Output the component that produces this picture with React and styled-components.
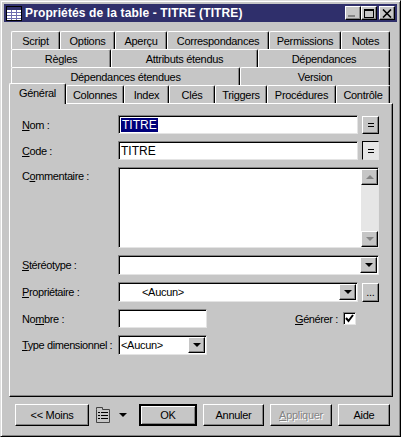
import React from "react";
import styled, { createGlobalStyle, css } from "styled-components";

const GlobalStyle = createGlobalStyle`
  html, body {
    margin: 0;
    padding: 0;
    background: #c6c6c6;
  }
  body {
    font-family: "Liberation Sans", Arial, sans-serif;
    font-size: 11px;
    letter-spacing: -0.3px;
    color: #000;
  }
`;

const raised = css`
  background: #c6c6c6;
  border: 1px solid;
  border-color: #fff #000 #000 #fff;
  box-shadow: inset -1px -1px #848484;
  box-sizing: border-box;
`;

const sunken = css`
  background: #fff;
  border: 1px solid;
  border-color: #848484 #e4e4e4 #e4e4e4 #848484;
  box-shadow: inset 1px 1px #000;
  box-sizing: border-box;
`;

const Window = styled.div`
  width: 401px;
  height: 437px;
  box-sizing: border-box;
  background: #c6c6c6;
  border: 1px solid;
  border-color: #dedede #000 #000 #dedede;
  box-shadow: inset 1px 1px #fff, inset -1px -1px #848484;
  padding: 3px;
  display: flex;
  flex-direction: column;
  overflow: hidden;
`;

const TitleBar = styled.div`
  height: 18px;
  flex: none;
  background: #2f2f6b;
  display: flex;
  align-items: center;
  padding: 0 2px;
  gap: 3px;
`;

const TitleText = styled.div`
  flex: 1;
  color: #fff;
  font-weight: bold;
  font-size: 12px;
  letter-spacing: 0.13px;
  white-space: nowrap;
`;

const TitleButtons = styled.div`
  display: flex;
`;

const TitleButton = styled.div`
  ${raised}
  width: 16px;
  height: 14px;
  margin-left: ${(p) => p.$gap || 0}px;
  display: flex;
  align-items: center;
  justify-content: center;
`;

const Body = styled.div`
  flex: 1;
  display: flex;
  flex-direction: column;
  padding: 9px 4px 0 5px;
`;

const TabStrip = styled.div`
  display: flex;
  flex-direction: column;
`;

const TabRow = styled.div`
  display: flex;
  height: 18px;
  padding-left: ${(p) => (p.$inset ? 0 : 2)}px;
`;

const Tab = styled.div`
  width: ${(p) => p.$w}px;
  height: 18px;
  flex: none;
  box-sizing: border-box;
  background: #c6c6c6;
  border-top: 1px solid #fff;
  border-left: 1px solid #fff;
  border-right: 1px solid #000;
  border-radius: 2px 2px 0 0;
  box-shadow: inset -1px 0 #848484;
  display: flex;
  align-items: center;
  justify-content: center;
  white-space: nowrap;
  ${(p) =>
    p.$active &&
    css`
      position: relative;
      z-index: 1;
      height: 21px;
      margin-top: -2px;
      padding-bottom: 2px;
    `}
`;

const Panel = styled.div`
  width: 384px;
  height: 294px;
  box-sizing: border-box;
  background: #c6c6c6;
  border: 1px solid;
  border-color: #fff #000 #000 #fff;
  box-shadow: inset -1px -1px #848484;
  padding: 11px 13px 0 12px;
`;

const Form = styled.div`
  display: grid;
  grid-template-rows: 19px 19px 81px 20px 20px 19px 20px;
  row-gap: 7px;
`;

const FormRow = styled.div`
  display: flex;
  align-items: ${(p) => (p.$top ? "flex-start" : "center")};
`;

const Label = styled.label`
  width: ${(p) => p.$w || 96}px;
  flex: none;
  white-space: nowrap;
  letter-spacing: -0.4px;
  padding-top: ${(p) => (p.$top ? 3 : 0)}px;
`;

const Field = styled.div`
  ${sunken}
  height: ${(p) => p.$h || 19}px;
  width: ${(p) => (p.$w ? `${p.$w}px` : "auto")};
  flex: ${(p) => (p.$w ? "none" : 1)};
  display: flex;
  align-items: center;
  padding: 0 2px 0 ${(p) => p.$pad || 2}px;
  font-size: 12px;
  letter-spacing: 0;
  line-height: 14px;
`;

const Selected = styled.span`
  background: #00007b;
  color: #fff;
  padding: 0 1px;
`;

const SmallButton = styled.div`
  ${raised}
  width: 17px;
  height: ${(p) => p.$h || 18}px;
  margin-left: 4px;
  flex: none;
  display: flex;
  align-items: center;
  justify-content: center;
  line-height: 1;
  ${(p) =>
    p.$focus &&
    css`
      background: #e6e6e6;
      border-color: #000 #e4e4e4 #e4e4e4 #000;
      box-shadow: none;
    `}
`;

const Equals = styled.span`
  width: 6px;
  height: 2px;
  border-top: 1px solid #000;
  border-bottom: 1px solid #000;
`;

const Memo = styled.div`
  ${sunken}
  flex: 1;
  height: 81px;
  display: flex;
  justify-content: flex-end;
  padding: 1px 0 0 1px;
`;

const ScrollBar = styled.div`
  width: 17px;
  background: #e6e6e6;
  display: flex;
  flex-direction: column;
  justify-content: space-between;
`;

const ScrollButton = styled.div`
  ${raised}
  height: 16px;
  display: flex;
  align-items: center;
  justify-content: center;
`;

const ArrowBox = styled.div`
  ${raised}
  width: 17px;
  height: 16px;
  flex: none;
  display: flex;
  align-items: center;
  justify-content: center;
`;

const Triangle = styled.span`
  width: 0;
  height: 0;
  border-left: ${(p) => p.$size || 4}px solid transparent;
  border-right: ${(p) => p.$size || 4}px solid transparent;
  ${(p) =>
    p.$up
      ? css`
          border-bottom: ${p.$size || 4}px solid ${p.$color || "#000"};
        `
      : css`
          border-top: ${p.$size || 4}px solid ${p.$color || "#000"};
        `}
`;

const Combo = styled(Field)`
  justify-content: space-between;
  padding: 0 1px 0 ${(p) => p.$pad || 2}px;
  font-size: 11px;
  letter-spacing: -0.3px;
`;

const Spacer = styled.div`
  flex: 1;
`;

const CheckBox = styled.div`
  ${sunken}
  width: 13px;
  height: 13px;
  flex: none;
  margin-left: 4px;
  margin-right: 23px;
  display: flex;
  align-items: center;
  justify-content: center;
`;

const Footer = styled.div`
  display: flex;
  align-items: center;
  padding: 7px 0 0 6px;
`;

const Button = styled.div`
  ${raised}
  width: ${(p) => p.$w}px;
  height: 22px;
  margin-left: ${(p) => p.$gap || 0}px;
  flex: none;
  display: flex;
  align-items: center;
  justify-content: center;
  white-space: nowrap;
  ${(p) =>
    p.$default &&
    css`
      border: 2px solid;
      border-color: #000;
      box-shadow: inset 1px 1px #fff, inset -1px -1px #848484;
    `}
  ${(p) =>
    p.$disabled &&
    css`
      color: #848484;
      text-shadow: 1px 1px 0 #fff;
    `}
`;

const ListIcon = styled.svg`
  margin-left: 7px;
  flex: none;
`;

const MenuArrow = styled.span`
  margin-left: 9px;
  margin-right: 12px;
  display: flex;
`;

function GridIcon() {
  return (
    <svg width="16" height="15" viewBox="0 0 16 15">
      <rect x="0.5" y="0.5" width="15" height="14" fill="#fff" stroke="#000" />
      <rect x="1" y="1" width="14" height="3" fill="#2f2f6b" />
      <path
        d="M1 6.5h14M1 9.5h14M1 12.5h14M5.5 4v10M10.5 4v10"
        stroke="#6b6bb0"
        fill="none"
      />
    </svg>
  );
}

function CloseGlyph() {
  return (
    <svg width="10" height="9" viewBox="0 0 10 9">
      <path d="M1 0.5l8 8M9 0.5l-8 8" stroke="#000" strokeWidth="1.6" fill="none" />
    </svg>
  );
}

const MinGlyph = styled.span`
  width: 7px;
  height: 2px;
  background: #848484;
  align-self: flex-end;
  margin: 0 3px 2px 0;
`;

const MaxGlyph = styled.span`
  width: 10px;
  height: 9px;
  box-sizing: border-box;
  border: 1px solid #000;
  border-top-width: 2px;
`;

function App() {
  return (
    <Window>
      <GlobalStyle />
      <TitleBar>
        <GridIcon />
        <TitleText>Propriétés de la table - TITRE (TITRE)</TitleText>
        <TitleButtons>
          <TitleButton>
            <MinGlyph />
          </TitleButton>
          <TitleButton>
            <MaxGlyph />
          </TitleButton>
          <TitleButton $gap={2}>
            <CloseGlyph />
          </TitleButton>
        </TitleButtons>
      </TitleBar>
      <Body>
        <TabStrip>
          <TabRow>
            <Tab $w={49}>Script</Tab>
            <Tab $w={55}>Options</Tab>
            <Tab $w={52}>Aperçu</Tab>
            <Tab $w={102}>Correspondances</Tab>
            <Tab $w={72}>Permissions</Tab>
            <Tab $w={49}>Notes</Tab>
          </TabRow>
          <TabRow>
            <Tab $w={100}>Règles</Tab>
            <Tab $w={147}>Attributs étendus</Tab>
            <Tab $w={132}>Dépendances</Tab>
          </TabRow>
          <TabRow>
            <Tab $w={229}>Dépendances étendues</Tab>
            <Tab $w={150}>Version</Tab>
          </TabRow>
          <TabRow $inset>
            <Tab $w={57} $active>
              Général
            </Tab>
            <Tab $w={58}>Colonnes</Tab>
            <Tab $w={45}>Index</Tab>
            <Tab $w={46}>Clés</Tab>
            <Tab $w={52}>Triggers</Tab>
            <Tab $w={69}>Procédures</Tab>
            <Tab $w={54}>Contrôle</Tab>
          </TabRow>
        </TabStrip>
        <Panel>
          <Form>
            <FormRow>
              <Label>
                <u>N</u>om :
              </Label>
              <Field>
                <Selected>TITRE</Selected>
              </Field>
              <SmallButton>
                <Equals />
              </SmallButton>
            </FormRow>
            <FormRow>
              <Label>
                <u>C</u>ode :
              </Label>
              <Field>TITRE</Field>
              <SmallButton $focus $h={19}>
                <Equals />
              </SmallButton>
            </FormRow>
            <FormRow $top>
              <Label $top>
                C<u>o</u>mmentaire :
              </Label>
              <Memo>
                <ScrollBar>
                  <ScrollButton>
                    <Triangle $up $color="#848484" />
                  </ScrollButton>
                  <ScrollButton>
                    <Triangle $color="#848484" />
                  </ScrollButton>
                </ScrollBar>
              </Memo>
            </FormRow>
            <FormRow>
              <Label>
                <u>S</u>téréotype :
              </Label>
              <Combo $h={20}>
                <Spacer />
                <ArrowBox>
                  <Triangle />
                </ArrowBox>
              </Combo>
            </FormRow>
            <FormRow>
              <Label>
                <u>P</u>ropriétaire :
              </Label>
              <Combo $h={20} $pad={23}>
                &lt;Aucun&gt;
                <ArrowBox>
                  <Triangle />
                </ArrowBox>
              </Combo>
              <SmallButton $h={19}>...</SmallButton>
            </FormRow>
            <FormRow>
              <Label>
                No<u>m</u>bre :
              </Label>
              <Field $w={89} />
              <Spacer />
              <Label $w={44}>
                <u>G</u>énérer :
              </Label>
              <CheckBox>
                <svg width="9" height="9" viewBox="0 0 9 9">
                  <path d="M1 4l2.5 3L8 1" stroke="#000" strokeWidth="2" fill="none" />
                </svg>
              </CheckBox>
            </FormRow>
            <FormRow>
              <Label>
                <u>T</u>ype dimensionnel :
              </Label>
              <Combo $w={89} $h={20}>
                &lt;Aucun&gt;
                <ArrowBox>
                  <Triangle />
                </ArrowBox>
              </Combo>
            </FormRow>
          </Form>
        </Panel>
        <Footer>
          <Button $w={74}>&lt;&lt; Moins</Button>
          <ListIcon width="14" height="16" viewBox="0 0 14 16">
            <path d="M0.5 2.5V0.5H6.5V2.5H13.5V15.5H0.5Z" fill="#c6c6c6" stroke="#444" />
            <path
              d="M2 5.5h2M5 5.5h7M2 8.5h2M5 8.5h7M2 11.5h2M5 11.5h7"
              stroke="#000"
              fill="none"
            />
          </ListIcon>
          <MenuArrow>
            <Triangle />
          </MenuArrow>
          <Button $w={58} $default>
            OK
          </Button>
          <Button $w={61} $gap={6}>
            Annuler
          </Button>
          <Button $w={62} $gap={6} $disabled>
            <span>
              <u>A</u>ppliquer
            </span>
          </Button>
          <Button $w={52} $gap={6}>
            Aide
          </Button>
        </Footer>
      </Body>
    </Window>
  );
}

export default App;
